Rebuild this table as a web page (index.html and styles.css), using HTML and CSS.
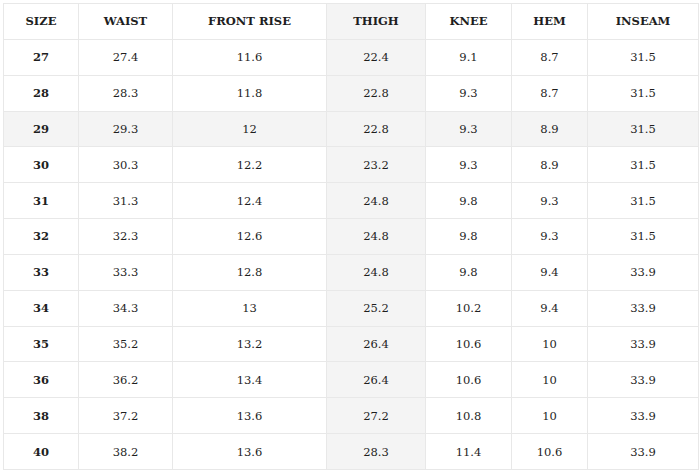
FILE: index.html
```html
<!DOCTYPE html>
<html>
<head>
<meta charset="utf-8">
<link rel="stylesheet" href="styles.css">
</head>
<body>
<table class="size-table">
<colgroup>
<col class="c1"><col class="c2"><col class="c3"><col class="c4 hl"><col class="c5"><col class="c6"><col class="c7">
</colgroup>
<thead>
<tr><th>SIZE</th><th>WAIST</th><th>FRONT RISE</th><th>THIGH</th><th>KNEE</th><th>HEM</th><th>INSEAM</th></tr>
</thead>
<tbody>
<tr><td class="sz">27</td><td>27.4</td><td>11.6</td><td>22.4</td><td>9.1</td><td>8.7</td><td>31.5</td></tr>
<tr><td class="sz">28</td><td>28.3</td><td>11.8</td><td>22.8</td><td>9.3</td><td>8.7</td><td>31.5</td></tr>
<tr class="hl"><td class="sz">29</td><td>29.3</td><td>12</td><td>22.8</td><td>9.3</td><td>8.9</td><td>31.5</td></tr>
<tr><td class="sz">30</td><td>30.3</td><td>12.2</td><td>23.2</td><td>9.3</td><td>8.9</td><td>31.5</td></tr>
<tr><td class="sz">31</td><td>31.3</td><td>12.4</td><td>24.8</td><td>9.8</td><td>9.3</td><td>31.5</td></tr>
<tr><td class="sz">32</td><td>32.3</td><td>12.6</td><td>24.8</td><td>9.8</td><td>9.3</td><td>31.5</td></tr>
<tr><td class="sz">33</td><td>33.3</td><td>12.8</td><td>24.8</td><td>9.8</td><td>9.4</td><td>33.9</td></tr>
<tr><td class="sz">34</td><td>34.3</td><td>13</td><td>25.2</td><td>10.2</td><td>9.4</td><td>33.9</td></tr>
<tr><td class="sz">35</td><td>35.2</td><td>13.2</td><td>26.4</td><td>10.6</td><td>10</td><td>33.9</td></tr>
<tr><td class="sz">36</td><td>36.2</td><td>13.4</td><td>26.4</td><td>10.6</td><td>10</td><td>33.9</td></tr>
<tr><td class="sz">38</td><td>37.2</td><td>13.6</td><td>27.2</td><td>10.8</td><td>10</td><td>33.9</td></tr>
<tr><td class="sz">40</td><td>38.2</td><td>13.6</td><td>28.3</td><td>11.4</td><td>10.6</td><td>33.9</td></tr>
</tbody>
</table>
</body>
</html>
```
FILE: styles.css
```css
html, body {
  margin: 0;
  padding: 0;
  background: #fff;
}
body {
  padding: 3px;
}
.size-table {
  border-collapse: collapse;
  table-layout: fixed;
  width: 695px;
  font-family: "DejaVu Serif", Georgia, serif;
  font-size: 11.5px;
  color: #1e1e1e;
}
.c1 { width: 75px; }
.c2 { width: 94px; }
.c3 { width: 154px; }
.c4 { width: 99px; }
.c5 { width: 86px; }
.c6 { width: 76px; }
.c7 { width: 111px; }
col.hl { background: #f4f4f4; }
tr.hl { background: #f4f4f4; }
.size-table th,
.size-table td {
  border: 1px solid #e8e8e8;
  text-align: center;
  vertical-align: middle;
  padding: 0;
  height: 34.85px;
}
.size-table th {
  font-weight: bold;
}
.size-table td.sz {
  font-weight: bold;
}
```
